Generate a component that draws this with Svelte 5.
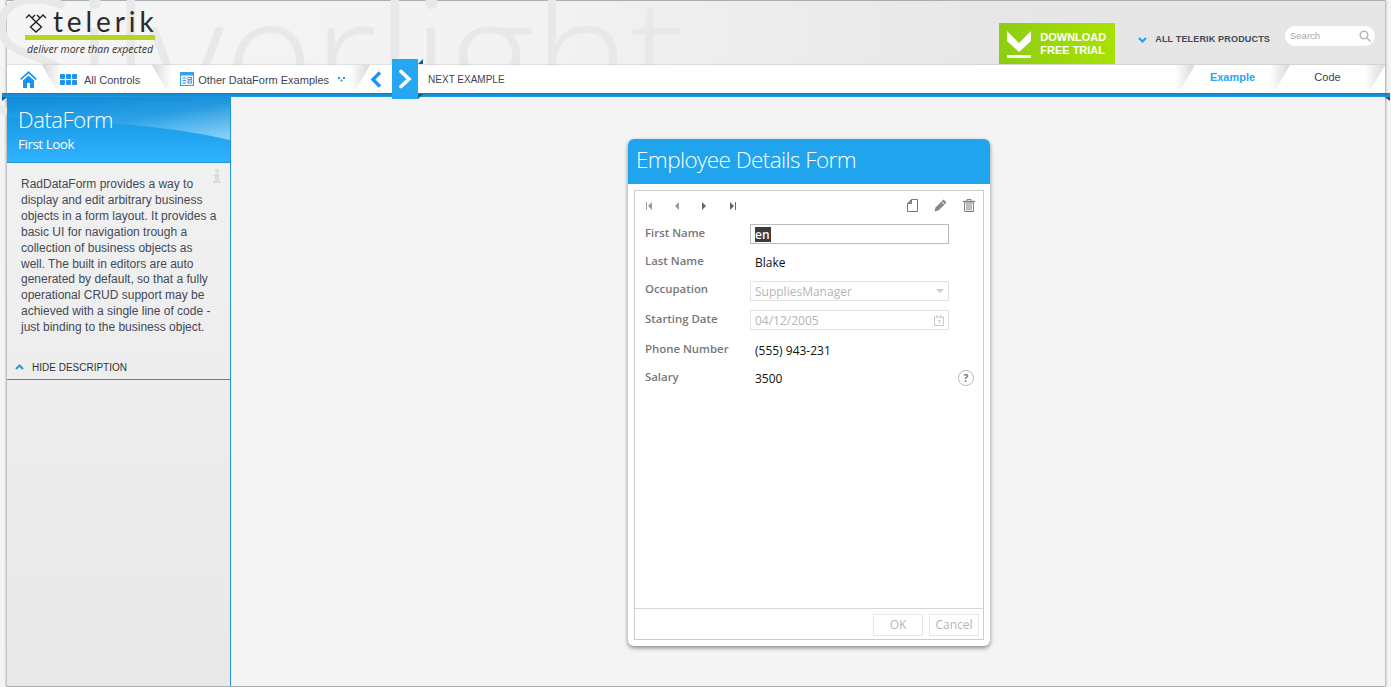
<script>
  const rows = [
    { label: 'First Name', kind: 'input', value: 'en' },
    { label: 'Last Name', kind: 'text', value: 'Blake' },
    { label: 'Occupation', kind: 'select', value: 'SuppliesManager' },
    { label: 'Starting Date', kind: 'date', value: '04/12/2005' },
    { label: 'Phone Number', kind: 'text', value: '(555) 943-231' },
    { label: 'Salary', kind: 'help', value: '3500' }
  ];
  const description = [
    'RadDataForm provides a way to',
    'display and edit arbitrary business',
    'objects in a form layout. It provides a',
    'basic UI for navigation trough a',
    'collection of business objects as',
    'well. The built in editors are auto',
    'generated by default, so that a fully',
    'operational CRUD support may be',
    'achieved with a single line of code -',
    'just binding to the business object.'
  ];
</script>

<div class="page">
  <div class="watermark">Silverlight</div>

  <div class="shell">
    <header class="top">
      <div class="logo">
        <div class="logo-row">
          <svg class="mark" width="22" height="20" viewBox="0 0 22 20" fill="none" stroke="#222" stroke-width="1.4">
            <path d="M1 5 L4 2 L7 5 L11 9 L15 5 L18 2 L21 5" />
            <path d="M7 5 L10 2 M15 5 L12 2" />
            <path d="M11 9 L5.5 14 L11 19 L16.5 14 Z" />
          </svg>
          <span class="wordmark">telerik</span>
        </div>
        <div class="logo-bar"></div>
        <div class="tagline">deliver more than expected</div>
      </div>

      <div class="top-right">
        <div class="download">
          <svg width="24" height="27" viewBox="0 0 24 27" fill="#fff">
            <path d="M0 0 L12 12 L24 0 V10 L12 21 L0 10 Z" />
            <rect x="0" y="24" width="24" height="3" />
          </svg>
          <div class="download-text">DOWNLOAD<br />FREE TRIAL</div>
        </div>
        <div class="products">
          <svg width="9" height="6" viewBox="0 0 9 6" fill="none" stroke="#1d9de8" stroke-width="2"><path d="M1 1 L4.5 4.5 L8 1" /></svg>
          <span>ALL TELERIK PRODUCTS</span>
        </div>
        <div class="search">
          <span>Search</span>
          <svg width="12" height="12" viewBox="0 0 12 12" fill="none" stroke="#b4b8bc" stroke-width="1.5"><circle cx="5" cy="5" r="3.8" /><path d="M8 8 L11.5 11.5" /></svg>
        </div>
      </div>
    </header>

    <nav class="nav">
      <div class="nav-left">
        <svg class="home" width="17" height="17" viewBox="0 0 17 17" fill="#1a94ee">
          <path d="M8.5 0 L17 8 L15.7 9 L8.5 2.4 L1.3 9 L0 8 Z" />
          <path d="M3 9.6 L8.5 4.6 L14 9.6 V17 H10 V12 H7 V17 H3 Z" />
        </svg>
        <span class="fold f1"></span>
        <span class="grid-icon"><i></i><i></i><i></i><i></i><i></i><i></i></span>
        <span class="nav-link controls">All Controls</span>
        <span class="fold f2"></span>
        <svg class="form-icon" width="14" height="14" viewBox="0 0 14 14">
          <rect x=".5" y=".5" width="13" height="13" fill="#eaf5fd" stroke="#3aa0e4" />
          <rect x="1" y="1" width="12" height="2.5" fill="#3aa0e4" />
          <path d="M2.5 6 H6 M2.5 8.5 H6 M2.5 11 H6" stroke="#4a9cd8" />
          <rect x="8" y="5.5" width="3.5" height="2" fill="none" stroke="#4a9cd8" />
          <rect x="8" y="9" width="3.5" height="2" fill="none" stroke="#4a9cd8" />
        </svg>
        <span class="nav-link examples">Other DataForm Examples</span>
        <svg class="dots" width="7" height="5" viewBox="0 0 7 5" fill="#1d9de8"><rect x="0" y="0" width="2" height="2" /><rect x="5" y="0" width="2" height="2" /><rect x="2.5" y="2.5" width="2" height="2" /></svg>
        <span class="fold f3"></span>
        <svg class="prev" width="12" height="17" viewBox="0 0 12 17" fill="none" stroke="#1a94ee" stroke-width="3.4"><path d="M10 1.5 L3 8.5 L10 15.5" /></svg>
        <div class="next-btn">
          <svg width="14" height="20" viewBox="0 0 14 20" fill="none" stroke="#fff" stroke-width="3.6" stroke-linecap="round"><path d="M3 2.5 L11 10 L3 17.5" /></svg>
          <span class="corner c-top"></span>
          <span class="corner c-bottom"></span>
        </div>
        <span class="next-label">NEXT EXAMPLE</span>
      </div>
      <div class="nav-right">
        <span class="fold"></span>
        <span class="tab active">Example</span>
        <span class="fold"></span>
        <span class="tab">Code</span>
        <span class="fold"></span>
      </div>
    </nav>
    <div class="ribbon"><span class="rib-l"></span><span class="rib-r"></span></div>

    <main class="main">
      <aside class="side">
        <div class="side-head">
          <svg class="swoosh" width="223" height="65" viewBox="0 0 223 65" preserveAspectRatio="none">
            <defs>
              <linearGradient id="sw" x1="0" y1="0" x2="1" y2="1">
                <stop offset="0" stop-color="#fff" stop-opacity="0" />
                <stop offset=".55" stop-color="#fff" stop-opacity=".08" />
                <stop offset="1" stop-color="#fff" stop-opacity=".5" />
              </linearGradient>
            </defs>
            <path d="M0 0 H223 V43 C150 26 70 24 0 21 Z" fill="url(#sw)" />
          </svg>
          <div class="side-title">DataForm</div>
          <div class="side-sub">First Look</div>
        </div>
        <div class="side-desc">
          <svg class="info" width="8" height="14" viewBox="0 0 8 14" fill="#dcdcdc">
            <circle cx="4" cy="2" r="2" />
            <path d="M0.5 5 H6 V12 H8 V14 H0 V12 H2 V7 H0.5 Z" />
          </svg>
          {#each description as line}
            <div>{line}</div>
          {/each}
        </div>
        <div class="hide">
          <svg width="9" height="6" viewBox="0 0 9 6" fill="none" stroke="#1d9de8" stroke-width="2"><path d="M1 5 L4.5 1.5 L8 5" /></svg>
          <span>HIDE DESCRIPTION</span>
        </div>
      </aside>

      <section class="content">
        <div class="card">
          <div class="card-head">Employee Details Form</div>
          <div class="card-body">
            <div class="form">
              <div class="toolbar">
                <div class="pager">
                  <svg width="7" height="8" viewBox="0 0 7 8" fill="#9a9a9a"><rect x="0" y="0" width="1" height="8" /><path d="M6 0 V8 L2 4 Z" /></svg>
                  <svg width="7" height="8" viewBox="0 0 7 8" fill="#9a9a9a"><path d="M5 0 V8 L1 4 Z" /></svg>
                  <svg width="7" height="8" viewBox="0 0 7 8" fill="#666"><path d="M1 0 V8 L5 4 Z" /></svg>
                  <svg width="7" height="8" viewBox="0 0 7 8" fill="#666"><path d="M1 0 V8 L5 4 Z" /><rect x="6" y="0" width="1" height="8" /></svg>
                </div>
                <div class="actions">
                  <svg width="11" height="13" viewBox="0 0 11 13" fill="none" stroke="#777"><path d="M.5 12.5 V4.5 L4.5 .5 H10.5 V12.5 Z" /><path d="M.5 4.5 L4.5 .5 V4.5 Z" fill="#999" /></svg>
                  <svg width="13" height="13" viewBox="0 0 13 13" fill="#888"><path d="M9.5 .5 L12.5 3.5 L4.5 11.5 L.5 12.5 L1.5 8.5 Z" /><path d="M8 3 L10.5 5.5" stroke="#fff" fill="none" /></svg>
                  <svg width="12" height="13" viewBox="0 0 12 13" fill="none" stroke="#808080"><path d="M0 2.5 H12" stroke-width="1.4" /><path d="M4 2 V.5 H8 V2" /><path d="M1.5 4 H10.5 V12.5 H1.5 Z" /><path d="M4 5 V11.5 M6 5 V11.5 M8 5 V11.5" /></svg>
                </div>
              </div>

              <div class="rows">
                {#each rows as r}
                  <div class="row">
                    <div class="label">{r.label}</div>
                    {#if r.kind === 'input'}
                      <div class="field editable"><span class="sel">en</span></div>
                    {:else if r.kind === 'select'}
                      <div class="field disabled">
                        <span>{r.value}</span>
                        <svg width="8" height="4" viewBox="0 0 8 4" fill="#ccc"><path d="M0 0 H8 L4 4 Z" /></svg>
                      </div>
                    {:else if r.kind === 'date'}
                      <div class="field disabled">
                        <span>{r.value}</span>
                        <svg width="10" height="11" viewBox="0 0 10 11" fill="none" stroke="#c8c8c8"><path d="M.5 2 H9.5 V10.5 H.5 Z" /><path d="M3 0 V3 M7 0 V3" /><path d="M4 5.5 H6 L5 8.5" /></svg>
                      </div>
                    {:else}
                      <div class="value">{r.value}</div>
                      {#if r.kind === 'help'}
                        <span class="help">?</span>
                      {/if}
                    {/if}
                  </div>
                {/each}
              </div>

              <div class="foot">
                <span class="btn">OK</span>
                <span class="btn">Cancel</span>
              </div>
            </div>
          </div>
        </div>
      </section>
    </main>
  </div>
</div>

<style>
  :global(body) {
    margin: 0;
    background: #f4f4f4;
    overflow: hidden;
  }
  .page {
    position: relative;
    width: 1391px;
    height: 687px;
    overflow: hidden;
    background: #f4f4f4;
    font-family: "Liberation Sans", Arial, sans-serif;
  }
  .watermark {
    position: absolute;
    left: -13px;
    top: -49px;
    font-family: "Open Sans", sans-serif;
    font-weight: 300;
    font-size: 165px;
    line-height: 200px;
    letter-spacing: -1px;
    color: #e8e8e8;
    white-space: nowrap;
    z-index: 1;
  }
  .shell {
    margin-left: 7px;
    width: 1378px;
    height: 687px;
    box-sizing: border-box;
    border-top: 1px solid #a9aeb3;
    border-bottom: 1px solid #a9aeb3;
    box-shadow: -1px 0 2px #a9aeb3, 1px 0 2px #a9aeb3;
    display: flex;
    flex-direction: column;
    position: relative;
    background: #f4f4f4;
  }
  .top {
    height: 64px;
    display: flex;
    justify-content: space-between;
    background: linear-gradient(90deg, #f5f5f5 0%, #f2f2f2 40%, #e6e6e6 75%, #e6e6e6 100%);
  }
  .logo {
    position: relative;
    z-index: 2;
    margin-left: 18px;
    width: 130px;
  }
  .logo-row {
    display: flex;
    align-items: flex-start;
    height: 34px;
  }
  .mark {
    margin-top: 12px;
    flex: none;
  }
  .wordmark {
    margin-left: 6px;
    font-family: "Lato", sans-serif;
    font-size: 28px;
    line-height: 40px;
    letter-spacing: 3.9px;
    color: #2a2a2a;
    height: 34px;
  }
  .logo-bar {
    height: 5px;
    background: #b3d81a;
  }
  .tagline {
    margin: 1px 0 0 2px;
    font-family: "Open Sans", sans-serif;
    font-style: italic;
    font-size: 10.5px;
    line-height: 16px;
    color: #333;
    white-space: nowrap;
  }
  .top-right {
    position: relative;
    z-index: 2;
    display: flex;
    align-items: flex-start;
  }
  .download {
    width: 116px;
    height: 41px;
    margin-top: 22px;
    box-sizing: border-box;
    padding: 8px 0 0 8px;
    display: flex;
    gap: 9px;
    background: linear-gradient(90deg, #8ccd14, #a9e200);
    align-items: flex-start;
  }
  .download-text {
    font-weight: bold;
    font-size: 11px;
    line-height: 13px;
    color: #fff;
  }
  .products {
    margin: 33px 0 0 23px;
    display: flex;
    align-items: center;
    gap: 8px;
    font-weight: bold;
    font-size: 9px;
    letter-spacing: .17px;
    line-height: 11px;
    color: #444a55;
    white-space: nowrap;
  }
  .search {
    width: 90px;
    height: 20px;
    margin: 25px 10px 0 15px;
    box-sizing: border-box;
    padding: 0 4px 0 5px;
    border-radius: 10px;
    background: #fff;
    display: flex;
    justify-content: space-between;
    align-items: center;
    font-size: 9.5px;
    color: #a8a8a8;
  }
  .search span {
    margin-top: -1px;
  }
  .nav {
    position: relative;
    z-index: 3;
    height: 28px;
    background: #fff;
    display: flex;
    justify-content: space-between;
    box-shadow: 0 -1px 1px rgba(0, 0, 0, .08);
  }
  .nav-left {
    display: flex;
    align-items: center;
    position: relative;
  }
  .nav-link {
    font-size: 11px;
    color: #3f4450;
    white-space: nowrap;
    margin-top: 1px;
  }
  .home {
    margin-left: 13px;
    margin-top: 1px;
    flex: none;
  }
  .fold {
    display: block;
    flex: none;
    width: 20px;
    height: 24px;
    align-self: flex-start;
    background: linear-gradient(90deg, #fff, #d8d8d8);
    clip-path: polygon(100% 0, 30% 100%, 0 100%, 0 0);
  }
  .nav-left .fold {
    transform: scaleX(-1);
  }
  .nav-left .f3 {
    transform: none;
  }
  .f1 {
    margin-left: 5px;
  }
  .grid-icon {
    display: grid;
    grid-template-columns: repeat(3, 5px);
    grid-auto-rows: 5px;
    gap: 1px;
    margin-left: -2px;
    position: relative;
  }
  .grid-icon i {
    background: #1a94ee;
    border-radius: 1px;
  }
  .controls {
    margin-left: 7px;
  }
  .f2 {
    margin-left: 12px;
  }
  .form-icon {
    margin-left: 8px;
    flex: none;
  }
  .examples {
    margin-left: 4px;
  }
  .dots {
    margin-left: 9px;
    flex: none;
  }
  .f3 {
    margin-left: 5px;
  }
  .prev {
    flex: none;
  }
  .next-btn {
    position: relative;
    width: 26px;
    height: 40px;
    margin-left: 10px;
    flex: none;
    background: #27a7f2;
    display: flex;
    align-items: center;
    justify-content: center;
  }
  .corner {
    position: absolute;
    left: 100%;
    width: 0;
    height: 0;
    border-style: solid;
  }
  .c-top {
    top: 0;
    border-width: 0 0 5px 5px;
    border-color: transparent transparent #0f5a8c transparent;
  }
  .c-bottom {
    bottom: 0;
    border-width: 5px 5px 0 0;
    border-color: #0f5a8c transparent transparent transparent;
  }
  .next-label {
    margin-left: 10px;
    margin-top: 1px;
    font-size: 10px;
    color: #3f4450;
    white-space: nowrap;
  }
  .nav-right {
    display: flex;
    align-items: center;
  }
  .tab {
    width: 75px;
    text-align: center;
    font-size: 11px;
    color: #3a3f4a;
    margin-top: -4px;
  }
  .tab.active {
    color: #2aa6ef;
    font-weight: bold;
  }
  .ribbon {
    position: relative;
    z-index: 2;
    margin: 0 -5px;
    height: 4px;
    background: linear-gradient(#0f7cc0, #1d9be6);
    box-shadow: 0 2px 3px rgba(0, 0, 0, .18);
  }
  .rib-l,
  .rib-r {
    position: absolute;
    top: 4px;
    width: 0;
    height: 0;
    border-style: solid;
  }
  .rib-l {
    left: 0;
    border-width: 4px 5px 0 0;
    border-color: #0f5a8c transparent transparent transparent;
  }
  .rib-r {
    right: 0;
    border-width: 4px 0 0 5px;
    border-color: #0f5a8c transparent transparent transparent;
  }
  .main {
    flex: 1;
    min-height: 0;
    display: flex;
    position: relative;
    z-index: 2;
  }
  .side {
    width: 224px;
    flex: none;
    box-sizing: border-box;
    border-right: 1px solid #1e96d8;
    background: linear-gradient(#f2f2f2, #e8e8e8);
    display: flex;
    flex-direction: column;
  }
  .side-head {
    position: relative;
    height: 65px;
    background: linear-gradient(#0d8ad8 0%, #1c9de8 40%, #2fb2ff 100%);
    border-bottom: 1px solid #1e96d8;
    color: #fff;
    font-family: "Open Sans", sans-serif;
    font-weight: 300;
    overflow: hidden;
  }
  .swoosh {
    position: absolute;
    left: 0;
    top: 0;
  }
  .side-title {
    position: relative;
    margin: 7px 0 0 11px;
    font-size: 22px;
    line-height: 30px;
    letter-spacing: -.4px;
  }
  .side-sub {
    position: relative;
    margin: 1px 0 0 11px;
    font-size: 13.5px;
    font-weight: 400;
    line-height: 18px;
    letter-spacing: -.5px;
  }
  .side-desc {
    position: relative;
    padding: 14px 0 0 14px;
    height: 184px;
    box-sizing: border-box;
    font-size: 12px;
    line-height: 15.9px;
    color: #444955;
    white-space: nowrap;
    flex: none;
  }
  .info {
    position: absolute;
    right: 9px;
    top: 6px;
  }
  .hide {
    height: 33px;
    box-sizing: border-box;
    border-bottom: 1px solid #1e96d8;
    padding: 8px 0 0 8px;
    display: flex;
    align-items: center;
    gap: 8px;
    font-size: 10px;
    color: #333;
    flex: none;
  }
  .content {
    flex: 1;
    display: flex;
    justify-content: center;
    align-items: flex-start;
    background: #f4f4f4;
  }
  .card {
    width: 362px;
    height: 507px;
    margin-top: 42px;
    margin-left: 2px;
    border-radius: 6px;
    background: #fff;
    box-shadow: 0 2px 4px rgba(0, 0, 0, .45);
    display: flex;
    flex-direction: column;
  }
  .card-head {
    height: 45px;
    box-sizing: border-box;
    padding-left: 8px;
    border-radius: 6px 6px 0 0;
    background: #21a4ee;
    color: #fff;
    font-family: "Open Sans", sans-serif;
    font-weight: 300;
    font-size: 22.5px;
    line-height: 41px;
    letter-spacing: -.58px;
    flex: none;
  }
  .card-body {
    flex: 1;
    padding: 6px;
    min-height: 0;
    display: flex;
  }
  .form {
    flex: 1;
    border: 1px solid #ccc;
    display: flex;
    flex-direction: column;
    font-family: "Open Sans", sans-serif;
    font-size: 12px;
  }
  .toolbar {
    height: 28px;
    display: flex;
    justify-content: space-between;
    align-items: center;
    flex: none;
    padding: 0 8px 0 11px;
  }
  .pager {
    display: flex;
    gap: 20.6px;
    margin-top: 1px;
  }
  .actions {
    display: flex;
    gap: 16px;
    align-items: center;
  }
  .rows {
    flex: 1;
    padding: 5px 0 0 10px;
    display: flex;
    flex-direction: column;
    gap: 8px;
  }
  .row {
    position: relative;
    height: 20px;
    display: flex;
    align-items: center;
  }
  .row:nth-child(3),
  .row:nth-child(4) {
    margin-top: 1px;
  }
  .row:nth-child(5) {
    margin-top: 2px;
  }
  .label {
    width: 105px;
    flex: none;
    font-weight: 600;
    color: #777;
    margin-top: -4px;
    font-size: 11.4px;
  }
  .row:nth-child(3) .label {
    margin-top: -6px;
  }
  .value {
    padding-left: 5px;
    color: #111;
  }
  .field {
    width: 199px;
    height: 20px;
    box-sizing: border-box;
    display: flex;
    align-items: center;
    justify-content: space-between;
    padding: 0 4px;
    border: 1px solid #e2e2e2;
    color: #b5b5b5;
  }
  .field.disabled svg {
    margin-right: 4px;
    margin-left: 2px;
  }
  .field.disabled {
    padding-right: 0;
  }
  .field.editable {
    border-color: #bbb;
    justify-content: flex-start;
  }
  .sel {
    background: #3c3c3c;
    color: #fff;
    line-height: 15px;
    padding-right: 1px;
    font-weight: 600;
  }
  .help {
    position: absolute;
    right: 9px;
    top: 2px;
    width: 14px;
    height: 14px;
    border: 1px solid #bbb;
    border-radius: 50%;
    text-align: center;
    font-size: 10px;
    line-height: 14px;
    font-weight: 700;
    color: #777;
  }
  .foot {
    height: 31px;
    box-sizing: border-box;
    border-top: 1px solid #d5d5d5;
    display: flex;
    justify-content: flex-end;
    align-items: center;
    gap: 6px;
    padding: 0 4px 0 0;
    flex: none;
  }
  .btn {
    width: 50px;
    height: 22px;
    box-sizing: border-box;
    border: 1px solid #e6e6e6;
    text-align: center;
    line-height: 20px;
    color: #b5b5b5;
    font-size: 12px;
    margin-top: 1px;
  }
</style>
